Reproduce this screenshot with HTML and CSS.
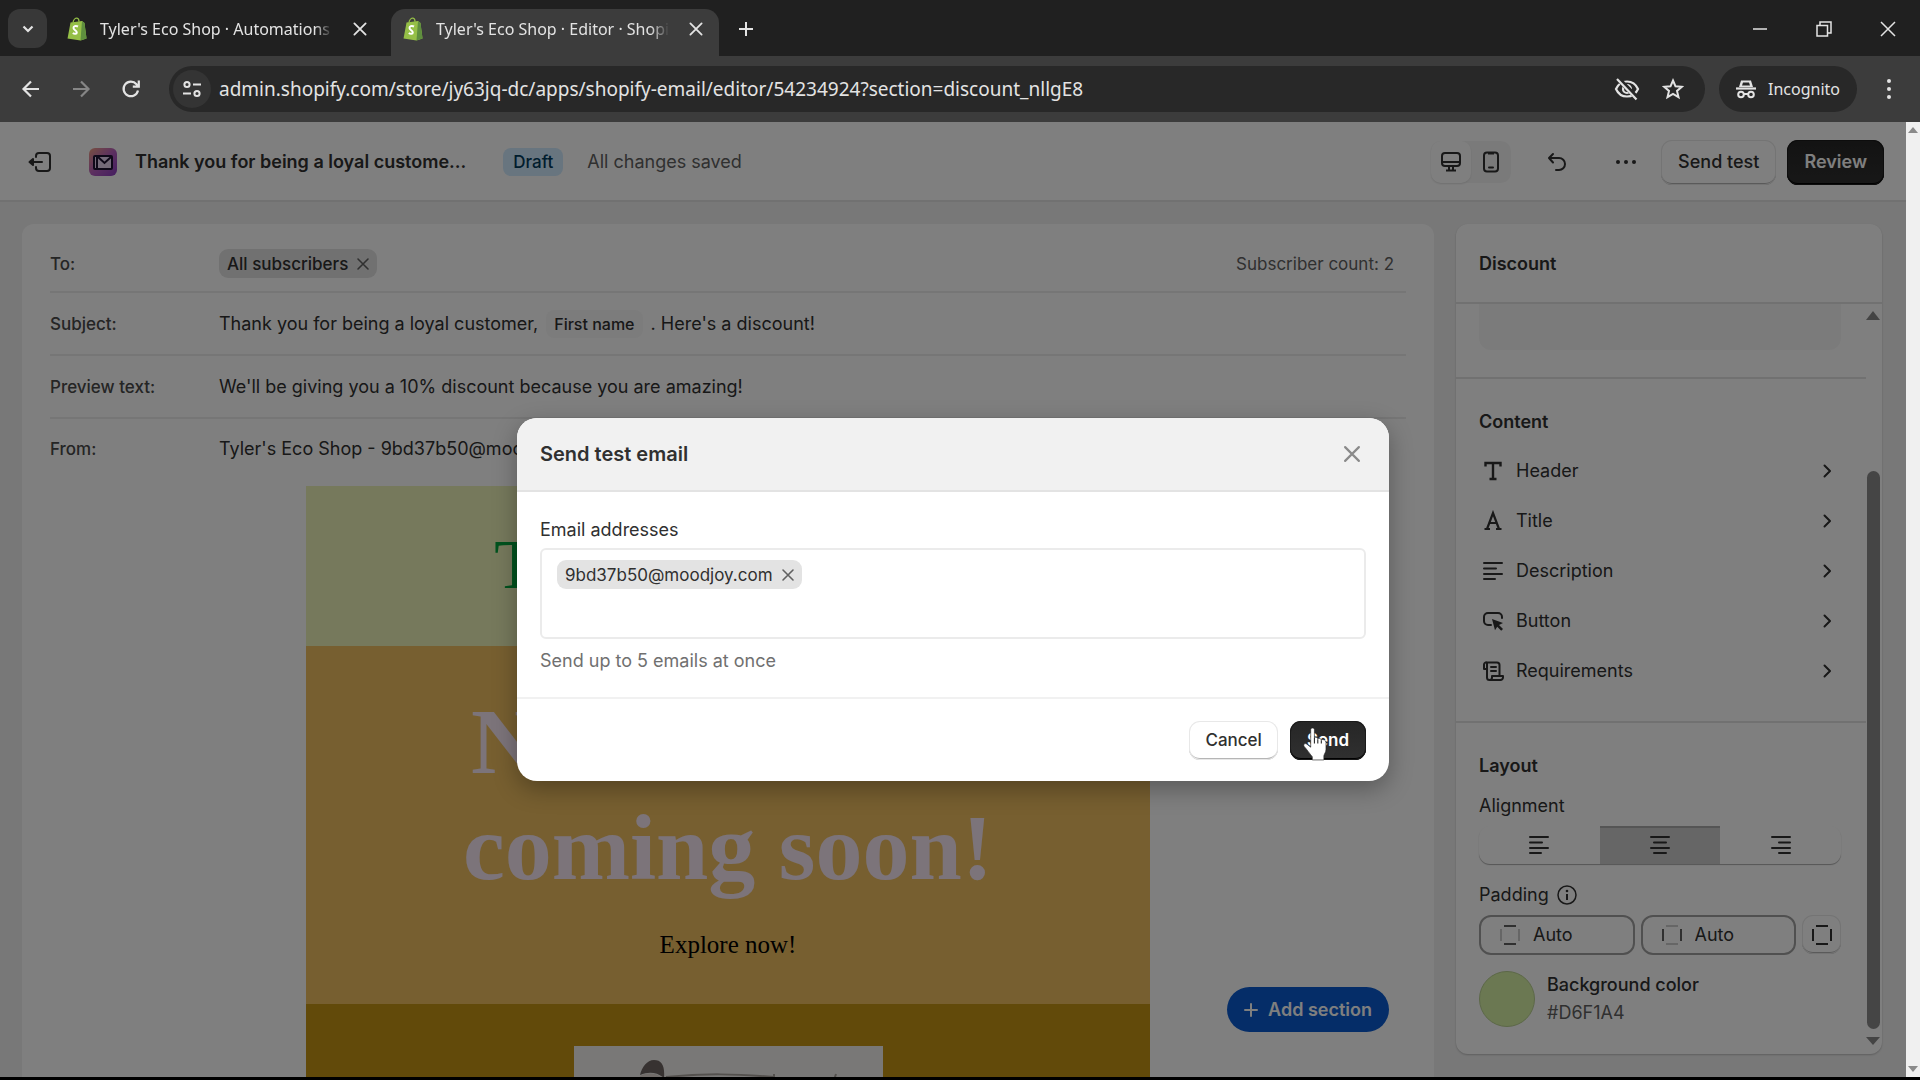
FILE: index.html
```html
<!DOCTYPE html>
<html lang="en">
<head>
<meta charset="utf-8">
<title>Tyler's Eco Shop · Editor · Shopify</title>
<link rel="stylesheet" href="styles.css">
</head>
<body>

<svg class="defs" aria-hidden="true">
  <symbol id="bag" viewBox="0 0 20 24">
    <path d="M3 5.500 14.500 4l2.500 2 2 15.500-6 2L0 21.500z" fill="#95bf47"/>
    <path d="M14.500 4 17 6l2 15.500-6 2z" fill="#5e8e3e"/>
    <path d="M5.500 5.500C6 2.500 8 1 9.500 1.200c1.500.2 2 2 2 3.500" fill="none" stroke="#95bf47" stroke-width="1.300"/>
    <path d="M10.500 9.500c-2.500-1.300-4.500-.3-4.500 1.400 0 2.200 3.300 2.400 3.300 4.500 0 1.800-2.500 1.800-4 .6" fill="none" stroke="#fff" stroke-width="2"/>
  </symbol>
  <symbol id="x" viewBox="0 0 16 16"><path d="m3 3 10 10M13 3 3 13" fill="none" stroke="currentColor" stroke-width="1.600" stroke-linecap="round"/></symbol>
  <symbol id="chevron" viewBox="0 0 16 16"><path d="m5.500 2.500 5.500 5.500-5.500 5.500" fill="none" stroke="currentColor" stroke-width="2" stroke-linecap="round" stroke-linejoin="round"/></symbol>
  <symbol id="text-left" viewBox="0 0 22 22"><path d="M2 3h18M2 8.500h12M2 14h18M2 19h11" stroke="currentColor" stroke-width="2" stroke-linecap="round"/></symbol>
  <symbol id="text-center" viewBox="0 0 22 22"><path d="M2 3h18M5 8.500h12M2 14h18M5 19h12" stroke="currentColor" stroke-width="2" stroke-linecap="round"/></symbol>
  <symbol id="text-right" viewBox="0 0 22 22"><path d="M2 3h18M9 8.500h11M2 14h18M9 19h11" stroke="currentColor" stroke-width="2" stroke-linecap="round"/></symbol>
</svg>

<div class="window">
  <header class="tabstrip">
    <button class="tab-search" aria-label="Search tabs"><svg width="16" height="16" viewBox="0 0 16 16"><path d="m3.500 5.500 4.500 4.500 4.500-4.500" fill="none" stroke="currentColor" stroke-width="2.200"/></svg></button>
    <div class="tab">
      <svg width="21" height="24"><use href="#bag"/></svg>
      <span class="tab-title">Tyler's Eco Shop · Automations</span>
      <button aria-label="Close tab"><svg width="18" height="18"><use href="#x"/></svg></button>
    </div>
    <div class="tab active">
      <svg width="21" height="24"><use href="#bag"/></svg>
      <span class="tab-title">Tyler's Eco Shop · Editor · Shopify</span>
      <button aria-label="Close tab"><svg width="18" height="18"><use href="#x"/></svg></button>
    </div>
    <button class="new-tab" aria-label="New tab"><svg width="18" height="18" viewBox="0 0 18 18"><path d="M9 2v14M2 9h14" stroke="currentColor" stroke-width="2"/></svg></button>
    <div class="window-controls">
      <button aria-label="Minimize"><svg width="16" height="16" viewBox="0 0 16 16"><path d="M1 8h14" stroke="currentColor" stroke-width="1.500"/></svg></button>
      <button aria-label="Restore"><svg width="16" height="16" viewBox="0 0 16 16"><path d="M1 4.500h10.500V15H1zM4 4.500V1h11v11h-3.500" fill="none" stroke="currentColor" stroke-width="1.500"/></svg></button>
      <button aria-label="Close"><svg width="16" height="16" viewBox="0 0 16 16"><path d="m1 1 14 14M15 1 1 15" stroke="currentColor" stroke-width="1.500"/></svg></button>
    </div>
  </header>

  <nav class="toolbar">
    <button aria-label="Back"><svg width="20" height="20" viewBox="0 0 20 20"><path d="M18 10H3M10 2.500 2.500 10l7.500 7.500" fill="none" stroke="currentColor" stroke-width="2.200"/></svg></button>
    <button class="off" aria-label="Forward"><svg width="20" height="20" viewBox="0 0 20 20"><path d="M2 10h15M10 2.500l7.500 7.500-7.500 7.500" fill="none" stroke="currentColor" stroke-width="2.200"/></svg></button>
    <button aria-label="Reload"><svg width="20" height="20" viewBox="0 0 20 20"><path d="M17 11.500A7.300 7.300 0 1 1 15.500 5.200L17.500 7.500M17.800 1.500v6.200h-6" fill="none" stroke="currentColor" stroke-width="2.200"/></svg></button>
    <div class="address">
      <button class="site-info" aria-label="Site information"><svg width="20" height="20" viewBox="0 0 20 20"><g fill="none" stroke="currentColor" stroke-width="2"><circle cx="5" cy="5.500" r="2.600"/><path d="M11 5.500h8M1 14.500h8"/><circle cx="15" cy="14.500" r="2.600"/></g></svg></button>
      <input type="text" aria-label="Address" value="admin.shopify.com/store/jy63jq-dc/apps/shopify-email/editor/54234924?section=discount_nllgE8">
      <button aria-label="Third-party cookies blocked"><svg width="26" height="24" viewBox="0 0 26 24"><g fill="none" stroke="currentColor" stroke-width="2.200"><path d="M13 4.500c5 0 9 3 11 7.500-2 4.500-6 7.500-11 7.500S4 16.500 2 12c2-4.500 6-7.500 11-7.500z"/><circle cx="13" cy="12" r="4"/></g><path d="M4 1.500 24 22" stroke="#282828" stroke-width="5"/><path d="M3 2 22.500 22.500" stroke="currentColor" stroke-width="2.200"/></svg></button>
      <button aria-label="Bookmark"><svg width="22" height="22" viewBox="0 0 22 22"><path d="m11 2.500 2.500 5.800 6.300.5-4.800 4.100 1.500 6.200L11 15.800l-5.500 3.300L7 12.900 2.200 8.800l6.300-.5z" fill="none" stroke="currentColor" stroke-width="2"/></svg></button>
    </div>
    <button class="incognito"><svg width="20" height="20" viewBox="0 0 20 20"><path d="M5 1.500h10l2 6.500H3z" fill="currentColor"/><path d="M7 3.500h6l1 3H6z" fill="#282828"/><path d="M0 9.500h20" stroke="currentColor" stroke-width="2.200"/><g fill="none" stroke="currentColor" stroke-width="2"><circle cx="5" cy="15.500" r="2.800"/><circle cx="15" cy="15.500" r="2.800"/><path d="M8 15h4"/></g></svg>Incognito</button>
    <button aria-label="Menu"><svg width="20" height="22" viewBox="0 0 20 22"><g fill="currentColor"><circle cx="10" cy="3" r="2"/><circle cx="10" cy="11" r="2"/><circle cx="10" cy="19" r="2"/></g></svg></button>
  </nav>

  <div class="viewport">
    <div class="app">
      <header class="topbar">
        <button class="exit" aria-label="Exit"><svg width="24" height="24" viewBox="0 0 24 24"><g fill="none" stroke="currentColor" stroke-width="2" stroke-linecap="round" stroke-linejoin="round"><path d="M8 7V6a3 3 0 0 1 3-3h8a3 3 0 0 1 3 3v12a3 3 0 0 1-3 3h-8a3 3 0 0 1-3-3v-1"/><path d="M14 12H2M5 9 1.500 12 5 15z" fill="currentColor"/></g></svg></button>
        <svg class="app-icon" width="28" height="28" viewBox="0 0 28 28">
          <defs><linearGradient id="mail" x1="0" y1="0" x2="1" y2="1"><stop offset="0" stop-color="#f0a080"/><stop offset=".5" stop-color="#b860c0"/><stop offset="1" stop-color="#8a3cc0"/></linearGradient></defs>
          <rect width="28" height="28" rx="6" fill="url(#mail)"/>
          <rect x="5" y="8" width="18" height="13" rx="1" fill="#ead6f5" stroke="#1f1233" stroke-width="2"/>
          <path d="M8 8v13M9 9l6.500 6L22 9" fill="none" stroke="#1f1233" stroke-width="2"/>
        </svg>
        <h1>Thank you for being a loyal custome...</h1>
        <span class="badge">Draft</span>
        <span class="saved">All changes saved</span>
        <div class="actions">
          <div class="devices">
            <button class="on" aria-label="Desktop"><svg width="22" height="22" viewBox="0 0 22 22"><g fill="none" stroke="currentColor" stroke-width="2"><rect x="2" y="2" width="18" height="13" rx="3"/><path d="M2 11h18M9 15v4M13 15v4M6 19.500h10"/></g></svg></button>
            <button aria-label="Mobile"><svg width="22" height="22" viewBox="0 0 22 22"><g fill="none" stroke="currentColor" stroke-width="2"><rect x="4" y="1.500" width="14" height="19" rx="3"/><path d="M9 16.500h4" stroke-linecap="round"/><path d="M8 2.500h6"/></g></svg></button>
          </div>
          <button class="plain" aria-label="Undo"><svg width="20" height="20" viewBox="0 0 20 20"><path d="M6 2 2 6l4 4.500M2.500 6H12a5.800 5.800 0 0 1 0 12H9" fill="none" stroke="currentColor" stroke-width="2" stroke-linecap="round" stroke-linejoin="round"/></svg></button>
          <button class="plain" aria-label="More actions"><svg width="22" height="22" viewBox="0 0 22 22"><g fill="currentColor"><circle cx="3" cy="11" r="2"/><circle cx="11" cy="11" r="2"/><circle cx="19" cy="11" r="2"/></g></svg></button>
          <button class="btn tall">Send test</button>
          <button class="btn tall primary">Review</button>
        </div>
      </header>

      <div class="editor">
        <main class="card">
          <dl class="fields">
            <div class="field">
              <dt>To:</dt>
              <dd><span class="tag">All subscribers <button aria-label="Remove All subscribers"><svg width="16" height="16"><use href="#x"/></svg></button></span></dd>
              <dd class="count">Subscriber count: 2</dd>
            </div>
            <div class="field">
              <dt>Subject:</dt>
              <dd>Thank you for being a loyal customer, <span class="variable">First name</span> . Here's a discount!</dd>
            </div>
            <div class="field">
              <dt>Preview text:</dt>
              <dd>We'll be giving you a 10% discount because you are amazing!</dd>
            </div>
            <div class="field">
              <dt>From:</dt>
              <dd>Tyler's Eco Shop - 9bd37b50@moodjoy.com</dd>
            </div>
          </dl>
          <article class="email">
            <div class="email-brand">Tyler's Eco Shop</div>
            <div class="email-hero">
              <h2>New arrivals<br>coming soon!</h2>
              <p>Explore now!</p>
            </div>
            <div class="email-product">
              <svg viewBox="0 0 309 90" preserveAspectRatio="xMidYMin slice">
                <rect width="309" height="90" fill="#f2f0ee"/>
                <path d="M66 29c2-8 7-15 14-15 8 0 11 6 10 18-6-5-14-7-24-3z" fill="#6e6562"/>
                <path d="M66 30c8-4 17-3 24 3v24H64z" fill="#e2d8d2"/>
                <path d="M92 31c40-4 70-3 108 0M200 28v12M262 28l-4 12" stroke="#a9a29d" stroke-width="2" fill="none"/>
              </svg>
            </div>
          </article>
          <button class="add-section"><svg width="14" height="14" viewBox="0 0 14 14"><path d="M7 1v12M1 7h12" stroke="currentColor" stroke-width="2" stroke-linecap="round"/></svg>Add section</button>
        </main>

        <aside class="panel">
          <h2 class="panel-title">Discount</h2>
          <div class="panel-body">
            <div class="panel-scroll">
              <section class="preview"><div class="preview-box"></div></section>
              <section class="content">
                <h3>Content</h3>
                <button class="item"><svg width="22" height="22" viewBox="0 0 22 22"><path d="M3.500 6.500V3h15v3.500M11 3v16M7.500 19h7" fill="none" stroke="currentColor" stroke-width="2.400"/></svg><span>Header</span><svg width="16" height="16"><use href="#chevron"/></svg></button>
                <button class="item"><svg width="22" height="22" viewBox="0 0 22 22"><path d="m5 19 6-16 6 16M7.500 13h7M2.500 19H8M14 19h5.500" fill="none" stroke="currentColor" stroke-width="2.200"/></svg><span>Title</span><svg width="16" height="16"><use href="#chevron"/></svg></button>
                <button class="item"><svg width="22" height="22"><use href="#text-left"/></svg><span>Description</span><svg width="16" height="16"><use href="#chevron"/></svg></button>
                <button class="item"><svg width="22" height="22" viewBox="0 0 22 22"><path d="M9 15H6a4 4 0 0 1-4-4V7a4 4 0 0 1 4-4h10a4 4 0 0 1 4 4v1" fill="none" stroke="currentColor" stroke-width="2" stroke-linecap="round"/><path d="m10 9 11 4-4 2 4 4-1.800 1.800-4-4-2.200 3.500z" fill="currentColor"/></svg><span>Button</span><svg width="16" height="16"><use href="#chevron"/></svg></button>
                <button class="item"><svg width="22" height="22" viewBox="0 0 22 22"><g fill="none" stroke="currentColor" stroke-width="2" stroke-linecap="round" stroke-linejoin="round"><path d="M5 9H2V4.500a2.300 2.300 0 0 1 3-2h10a2.500 2.500 0 0 1 2.500 2.500v10M5 3v14.500A2.500 2.500 0 0 0 7.500 20M10 16h11v1.500a2.500 2.500 0 0 1-2.500 2.500h-11a2.500 2.500 0 0 0 2.500-2.500z"/><path d="M9 7h5M9 11h5"/></g></svg><span>Requirements</span><svg width="16" height="16"><use href="#chevron"/></svg></button>
              </section>
              <section class="layout">
                <h3>Layout</h3>
                <span class="label" id="alignment">Alignment</span>
                <div class="segmented" role="group" aria-labelledby="alignment">
                  <button aria-label="Left"><svg width="22" height="22"><use href="#text-left"/></svg></button>
                  <button class="on" aria-label="Center"><svg width="22" height="22"><use href="#text-center"/></svg></button>
                  <button aria-label="Right"><svg width="22" height="22"><use href="#text-right"/></svg></button>
                </div>
                <span class="label">Padding <svg width="20" height="20" viewBox="0 0 20 20"><circle cx="10" cy="10" r="9" fill="none" stroke="currentColor" stroke-width="1.500"/><circle cx="10" cy="6" r="1.300" fill="currentColor"/><path d="M10 9v6" stroke="currentColor" stroke-width="2"/></svg></span>
                <div class="padding-row">
                  <label class="pad"><svg width="20" height="20" viewBox="0 0 20 20"><path d="M4 1h12M4 19h12" stroke="#616161" stroke-width="2"/><path d="M1 4v12M19 4v12" stroke="#ccc" stroke-width="2"/></svg><input type="text" value="Auto" aria-label="Vertical padding"></label>
                  <label class="pad"><svg width="20" height="20" viewBox="0 0 20 20"><path d="M4 1h12M4 19h12" stroke="#ccc" stroke-width="2"/><path d="M1 4v12M19 4v12" stroke="#616161" stroke-width="2"/></svg><input type="text" value="Auto" aria-label="Horizontal padding"></label>
                  <button class="btn square" aria-label="Individual padding"><svg width="20" height="20" viewBox="0 0 20 20"><path d="M4 1h12M4 19h12M1 4v12M19 4v12" stroke="currentColor" stroke-width="2"/></svg></button>
                </div>
                <button class="color"><span class="swatch"></span><span><b>Background color</b><br>#D6F1A4</span></button>
              </section>
            </div>
            <div class="scrollbar inner">
              <svg width="14" height="10" viewBox="0 0 14 10"><path d="m7 0 7 9H0z" fill="#898989"/></svg>
              <div class="thumb"></div>
              <svg width="14" height="10" viewBox="0 0 14 10"><path d="M0 1h14L7 9z" fill="#898989"/></svg>
            </div>
          </div>
        </aside>
      </div>

      <div class="backdrop">
        <div class="modal" role="dialog" aria-labelledby="modal-title">
          <header>
            <h2 id="modal-title">Send test email</h2>
            <button aria-label="Close"><svg width="22" height="22"><use href="#x"/></svg></button>
          </header>
          <div class="modal-body">
            <label for="addresses">Email addresses</label>
            <div class="tag-box">
              <span class="tag">9bd37b50@moodjoy.com <button aria-label="Remove"><svg width="16" height="16"><use href="#x"/></svg></button></span>
              <input type="text" id="addresses">
            </div>
            <p>Send up to 5 emails at once</p>
          </div>
          <footer>
            <button class="btn">Cancel</button>
            <span class="send">
              <button class="btn primary">Send</button>
              <svg class="pointer" width="28" height="34" viewBox="0 0 26 32"><path d="M8 2.500C8 .5 11.500.5 11.500 2.500V10c1.500-1 3 0 3.200 1 1.500-.8 3 0 3.200 1 2-.8 4.500.5 4.500 2.500V21c0 3-1.500 4-2 6v4H9.500v-3C7 25 4 20.500 2 18.500c-1.500-2 .5-3.800 2.500-2.300L8 19z" fill="#fff" stroke="#222" stroke-width=".6"/><path d="M11.500 10v5.500M14.700 11.500v4M18 12.500v3" stroke="#222" stroke-width="1"/></svg>
            </span>
          </footer>
        </div>
      </div>
    </div>

    <div class="scrollbar">
      <svg width="10" height="8" viewBox="0 0 10 8"><path d="m5 1 5 6H0z" fill="#8a8a8a"/></svg>
      <svg width="10" height="8" viewBox="0 0 10 8"><path d="M0 1h10L5 7z" fill="#8a8a8a"/></svg>
    </div>
  </div>
</div>
</body>
</html>
```

FILE: styles.css
```css
* {
  box-sizing: border-box;
}
html, body {
  margin: 0;
  height: 100%;
}
body {
  background: #000;
  color: #303030;
  font: 18px/24px Inter, "Liberation Sans", sans-serif;
  overflow: hidden;
}
button, input {
  font: inherit;
  color: inherit;
  background: none;
  border: 0;
  padding: 0;
  margin: 0;
  outline: none;
}
button, svg {
  flex: none;
}
button {
  display: flex;
  align-items: center;
  justify-content: center;
}
h1, h2, h3, p, dl, dd {
  margin: 0;
}
svg {
  display: block;
}
.defs {
  position: absolute;
  width: 0;
  height: 0;
}
.window {
  height: 100vh;
  padding-bottom: 3px;
  display: flex;
  flex-direction: column;
}

/* browser chrome */
.tabstrip, .toolbar {
  flex: none;
  display: flex;
  color: #e3e3e3;
  font-family: "Noto Sans", sans-serif;
}
.tabstrip {
  height: 56px;
  padding: 9px 0 0 8px;
  background: #202020;
  font-size: 16px;
}
.tab-search {
  width: 39px;
  height: 39px;
  border-radius: 12px;
  background: #383838;
}
.tab {
  width: 328px;
  padding: 0 14px 8px 12px;
  margin-left: 8px;
  display: flex;
  align-items: center;
  gap: 12px;
}
.tab.active {
  background: #3c3c3c;
  border-radius: 14px 14px 0 0;
}
.tab-title {
  flex: 1;
  overflow: hidden;
  white-space: nowrap;
  -webkit-mask-image: linear-gradient(to right, #000 92%, transparent);
}
.tab > button {
  margin-left: 6px;
}
.new-tab {
  width: 38px;
  height: 39px;
  margin-left: 8px;
}
.window-controls {
  margin-left: auto;
  display: flex;
}
.window-controls button {
  width: 64px;
  height: 39px;
}
.toolbar {
  height: 66px;
  padding: 0 21px;
  background: #3c3c3c;
  align-items: center;
  gap: 30px;
  font-size: 19px;
}
.off {
  color: #868686;
}
.address {
  flex: 1;
  height: 46px;
  margin: 0 -16px 0 -2px;
  padding: 0 21px 0 4px;
  border-radius: 23px;
  background: #282828;
  display: flex;
  align-items: center;
  gap: 22px;
}
.site-info {
  width: 38px;
  height: 38px;
  border-radius: 19px;
  background: #343434;
}
.address input {
  flex: 1;
  min-width: 0;
  margin-left: -14px;
}
.incognito {
  height: 46px;
  padding: 0 17px;
  gap: 12px;
  border-radius: 23px;
  background: #282828;
  font-size: 16px;
}
.incognito + button {
  margin-left: -8px;
}

/* page */
.viewport {
  flex: 1;
  min-height: 0;
  display: flex;
}
.app {
  flex: 1;
  min-width: 0;
  position: relative;
  display: flex;
  flex-direction: column;
  background: #f1f1f1;
}
.scrollbar {
  width: 14px;
  padding: 4px 0;
  background: #f0f0f0;
  display: flex;
  flex-direction: column;
  justify-content: space-between;
  align-items: center;
}
.topbar {
  flex: none;
  height: 80px;
  padding: 2px 22px 0 28px;
  background: #fff;
  border-bottom: 2px solid #e3e3e3;
  display: flex;
  align-items: center;
}
.app-icon {
  margin: 0 18px 0 37px;
}
h1 {
  font-size: 18px;
  line-height: 24px;
  font-weight: 600;
}
.badge {
  margin: 0 24px 0 37px;
  padding: 2px 10px;
  border-radius: 8px;
  background: #d0eaff;
  color: #003a5a;
  font-size: 17px;
  font-weight: 500;
}
.saved {
  color: #616161;
}
.actions {
  margin-left: auto;
  display: flex;
  align-items: center;
  gap: 11px;
}
.devices {
  display: flex;
  margin-right: 6px;
  border-radius: 10px;
  background: #f5f5f5;
}
.devices button {
  width: 40px;
  height: 42px;
}
.devices .on {
  border-radius: 10px;
  background: #fff;
  box-shadow: 0 1px 2px #ddd;
}
.plain {
  width: 58px;
  height: 40px;
}
.plain + .btn {
  margin-left: -5px;
}
.btn {
  height: 39px;
  padding: 0 16px;
  border-radius: 11px;
  background: #fff;
  box-shadow: inset 0 0 0 1px #e8e8e8, inset 0 -2px 0 #b5b5b5;
  font-size: 17px;
  font-weight: 500;
}
.btn.tall {
  height: 45px;
  padding: 0 17px;
  font-size: 18px;
}
.btn.primary {
  padding: 0 17px;
  background: linear-gradient(#262626, #303030);
  box-shadow: inset 0 0 0 1px #1a1a1a, inset 0 -2px 0 #000;
  color: #fff;
  font-weight: 600;
}
.editor {
  flex: 1;
  min-height: 0;
  padding: 22px 24px 0 22px;
  display: flex;
  gap: 22px;
}
.card {
  flex: 1;
  position: relative;
  overflow: hidden;
  background: #fff;
  border-radius: 12px 12px 0 0;
}
.fields {
  padding: 12px 28px 0;
}
.field {
  height: 63px;
  display: flex;
  align-items: center;
  border-bottom: 2px solid #ededed;
}
.field:first-child {
  height: 57px;
}
.field:last-child {
  border: 0;
  height: 60px;
}
dt {
  width: 169px;
  color: #4a4a4a;
  font-size: 17px;
  font-weight: 500;
}
.count {
  margin-left: auto;
  padding-right: 12px;
  color: #616161;
  font-size: 17px;
}
.tag {
  height: 29px;
  padding: 0 6px 0 8px;
  border-radius: 9px;
  background: #e3e3e3;
  display: inline-flex;
  align-items: center;
  gap: 7px;
  font-size: 17px;
}
.tag button {
  color: #616161;
}
.field .tag {
  font-weight: 500;
}
.variable {
  padding: 4px 8px;
  margin: 0 3px;
  border-radius: 8px;
  background: #f9f9f9;
  font-size: 16px;
  font-weight: 500;
}
.email {
  width: 844px;
  max-width: 100%;
  margin: 7px auto 0;
  font-family: "Liberation Serif", serif;
  text-align: center;
}
.email-brand {
  height: 160px;
  padding-top: 39px;
  background: #ecf2b8;
  color: #00a43c;
  font-size: 69px;
  line-height: 80px;
}
.email-hero {
  height: 358px;
  padding-top: 42px;
  background: #eebe60;
  color: #000;
  font-size: 25px;
}
.email-hero h2 {
  color: #f8e8f4;
  font-size: 94px;
  line-height: 106px;
  margin-bottom: 33px;
}
.email-product {
  height: 200px;
  padding-top: 42px;
  background: #c49414;
}
.email-product svg {
  width: 309px;
  margin: 0 auto;
}
.add-section {
  position: absolute;
  right: 45px;
  bottom: 45px;
  height: 45px;
  padding: 0 17px;
  gap: 10px;
  border-radius: 23px;
  background: #0a5bd0;
  color: #fff;
  font-weight: 600;
}

/* settings panel */
.panel {
  width: 426px;
  margin-bottom: 23px;
  background: #fff;
  border-radius: 12px;
  box-shadow: 0 1px 2px #bbb;
  display: flex;
  flex-direction: column;
}
.panel-title {
  padding: 26px 23px 25px;
  border-bottom: 2px solid #e3e3e3;
  font-size: 18px;
  line-height: 27px;
  font-weight: 600;
}
.panel-body {
  flex: 1;
  min-height: 0;
  display: flex;
}
.panel-scroll {
  flex: 1;
  overflow: hidden;
}
section {
  padding: 0 25px 0 23px;
}
.preview {
  height: 75px;
  border-bottom: 2px solid #e3e3e3;
}
.preview-box {
  height: 46px;
  border-radius: 0 0 12px 12px;
  background: #f7f7f7;
}
h3 {
  font-size: 18px;
  line-height: 24px;
  font-weight: 600;
}
.content {
  padding-top: 31px;
  padding-bottom: 25px;
  border-bottom: 2px solid #e3e3e3;
}
.content h3 {
  margin-bottom: 12px;
}
.item {
  width: 100%;
  height: 50px;
  padding: 0 6px 0 3px;
  gap: 12px;
}
.item span {
  flex: 1;
  text-align: left;
}
.layout {
  padding-top: 31px;
}
.label {
  display: flex;
  align-items: center;
  gap: 8px;
  margin-bottom: 8px;
}
.layout h3 {
  margin-bottom: 16px;
}
.segmented {
  height: 38px;
  margin-bottom: 19px;
  border-radius: 11px;
  overflow: hidden;
  box-shadow: 0 1px 1px #aaa;
  display: flex;
}
.segmented button {
  flex: 1;
}
.segmented .on {
  background: #ccc;
  box-shadow: inset 0 2px 0 #aaa;
}
.padding-row {
  display: flex;
  gap: 6px;
  margin-bottom: 16px;
}
.pad {
  flex: 1;
  height: 40px;
  min-width: 0;
  padding: 0 19px;
  border: 2px solid #a0a0a0;
  border-radius: 12px;
  display: flex;
  align-items: center;
  gap: 13px;
}
.pad input {
  width: 100%;
  min-width: 0;
}
.square {
  width: 39px;
  padding: 0;
}
.color {
  gap: 12px;
  color: #616161;
  text-align: left;
  line-height: 28px;
}
.color b {
  color: #303030;
  font-weight: 500;
}
.swatch {
  width: 56px;
  height: 56px;
  border-radius: 50%;
  background: #d6f1a4;
  border: 1px solid #b8cf90;
}
.inner {
  width: 14px;
  margin-right: 2px;
  padding: 7px 0 8px;
  background: none;
}
.thumb {
  width: 13px;
  height: 558px;
  margin: auto 0 7px;
  border-radius: 7px;
  background: #8b8b8b;
}

/* modal */
.backdrop {
  position: absolute;
  inset: 0;
  background: rgba(0, 0, 0, .5);
  display: flex;
  align-items: center;
  justify-content: center;
}
.modal {
  width: 872px;
  border-radius: 20px;
  background: #fff;
  box-shadow: 0 8px 24px rgba(0, 0, 0, .3);
}
.modal header {
  height: 74px;
  padding: 0 26px 0 23px;
  border-bottom: 2px solid #e3e3e3;
  border-radius: 20px 20px 0 0;
  background: #f1f1f1;
  display: flex;
  align-items: center;
  justify-content: space-between;
}
.modal header h2 {
  font-size: 20px;
  font-weight: 600;
}
.modal header button {
  color: #8a8a8a;
}
.modal-body {
  padding: 26px 23px 24px;
}
.tag-box {
  height: 91px;
  margin: 6px 0 10px;
  padding: 10px 15px;
  border: 2px solid #ebebeb;
  border-radius: 6px;
}
.tag-box input {
  width: 100%;
}
.modal-body p {
  color: #707070;
}
.modal footer {
  height: 84px;
  padding: 0 23px;
  border-top: 2px solid #f1f1f1;
  display: flex;
  align-items: center;
  justify-content: flex-end;
  gap: 12px;
}
.send {
  position: relative;
}
.pointer {
  position: absolute;
  left: 12px;
  top: 6px;
}
```
